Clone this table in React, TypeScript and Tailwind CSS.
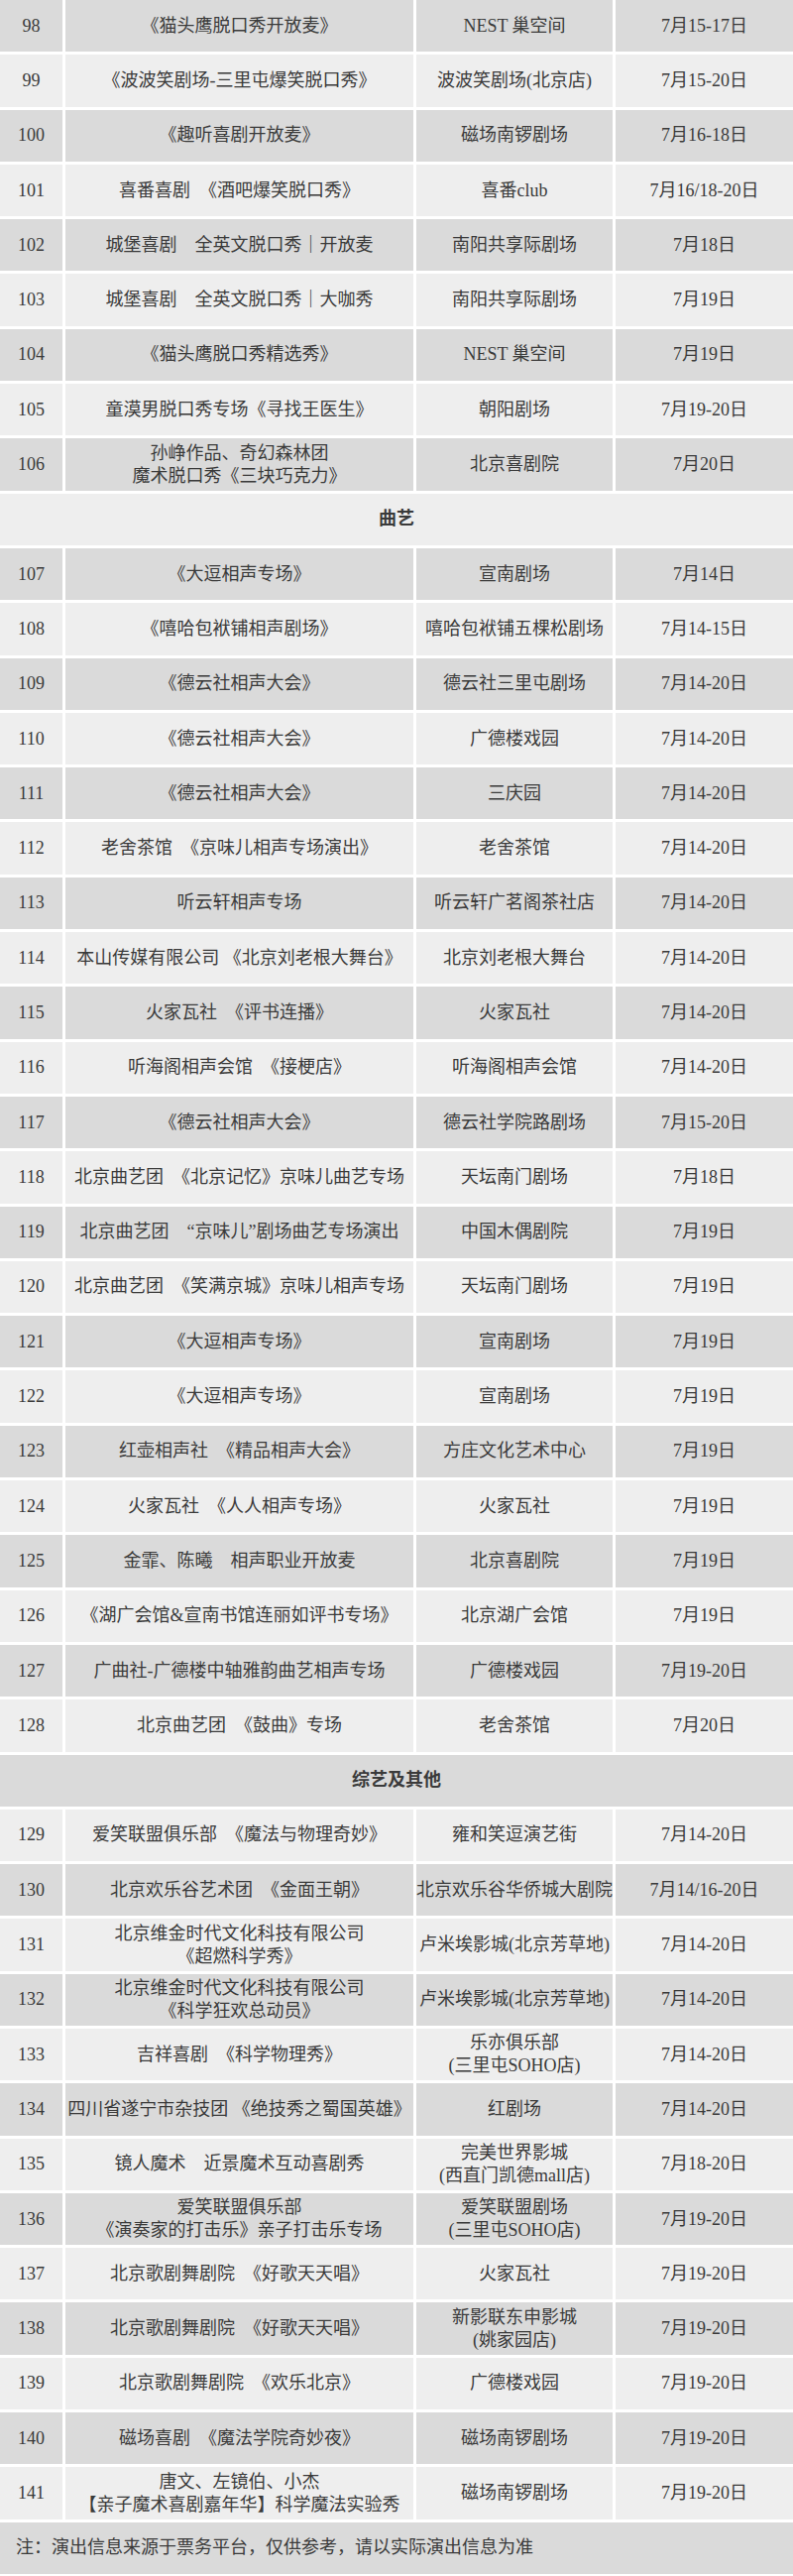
import React from "react";

type Show = {
  kind: "show";
  no: number;
  title: string[];
  venue: string[];
  date: string;
};

type Section = { kind: "section"; label: string };
type Note = { kind: "note"; text: string };
type Item = Show | Section | Note;

const s = (no: number, title: string | string[], venue: string | string[], date: string): Show => ({
  kind: "show",
  no,
  title: Array.isArray(title) ? title : [title],
  venue: Array.isArray(venue) ? venue : [venue],
  date,
});

const items: Item[] = [
  s(98, "《猫头鹰脱口秀开放麦》", "NEST 巢空间", "7月15-17日"),
  s(99, "《波波笑剧场-三里屯爆笑脱口秀》", "波波笑剧场(北京店)", "7月15-20日"),
  s(100, "《趣听喜剧开放麦》", "磁场南锣剧场", "7月16-18日"),
  s(101, "喜番喜剧　《酒吧爆笑脱口秀》", "喜番club", "7月16/18-20日"),
  s(102, "城堡喜剧　全英文脱口秀｜开放麦", "南阳共享际剧场", "7月18日"),
  s(103, "城堡喜剧　全英文脱口秀｜大咖秀", "南阳共享际剧场", "7月19日"),
  s(104, "《猫头鹰脱口秀精选秀》", "NEST 巢空间", "7月19日"),
  s(105, "童漠男脱口秀专场《寻找王医生》", "朝阳剧场", "7月19-20日"),
  s(106, ["孙峥作品、奇幻森林团", "魔术脱口秀《三块巧克力》"], "北京喜剧院", "7月20日"),
  { kind: "section", label: "曲艺" },
  s(107, "《大逗相声专场》", "宣南剧场", "7月14日"),
  s(108, "《嘻哈包袱铺相声剧场》", "嘻哈包袱铺五棵松剧场", "7月14-15日"),
  s(109, "《德云社相声大会》", "德云社三里屯剧场", "7月14-20日"),
  s(110, "《德云社相声大会》", "广德楼戏园", "7月14-20日"),
  s(111, "《德云社相声大会》", "三庆园", "7月14-20日"),
  s(112, "老舍茶馆　《京味儿相声专场演出》", "老舍茶馆", "7月14-20日"),
  s(113, "听云轩相声专场", "听云轩广茗阁茶社店", "7月14-20日"),
  s(114, "本山传媒有限公司 《北京刘老根大舞台》", "北京刘老根大舞台", "7月14-20日"),
  s(115, "火家瓦社　《评书连播》", "火家瓦社", "7月14-20日"),
  s(116, "听海阁相声会馆　《接梗店》", "听海阁相声会馆", "7月14-20日"),
  s(117, "《德云社相声大会》", "德云社学院路剧场", "7月15-20日"),
  s(118, "北京曲艺团　《北京记忆》京味儿曲艺专场", "天坛南门剧场", "7月18日"),
  s(119, "北京曲艺团　“京味儿”剧场曲艺专场演出", "中国木偶剧院", "7月19日"),
  s(120, "北京曲艺团　《笑满京城》京味儿相声专场", "天坛南门剧场", "7月19日"),
  s(121, "《大逗相声专场》", "宣南剧场", "7月19日"),
  s(122, "《大逗相声专场》", "宣南剧场", "7月19日"),
  s(123, "红壶相声社　《精品相声大会》", "方庄文化艺术中心", "7月19日"),
  s(124, "火家瓦社　《人人相声专场》", "火家瓦社", "7月19日"),
  s(125, "金霏、陈曦　相声职业开放麦", "北京喜剧院", "7月19日"),
  s(126, "《湖广会馆&宣南书馆连丽如评书专场》", "北京湖广会馆", "7月19日"),
  s(127, "广曲社-广德楼中轴雅韵曲艺相声专场", "广德楼戏园", "7月19-20日"),
  s(128, "北京曲艺团　《鼓曲》专场", "老舍茶馆", "7月20日"),
  { kind: "section", label: "综艺及其他" },
  s(129, "爱笑联盟俱乐部　《魔法与物理奇妙》", "雍和笑逗演艺街", "7月14-20日"),
  s(130, "北京欢乐谷艺术团　《金面王朝》", "北京欢乐谷华侨城大剧院", "7月14/16-20日"),
  s(131, ["北京维金时代文化科技有限公司", "《超燃科学秀》"], "卢米埃影城(北京芳草地)", "7月14-20日"),
  s(132, ["北京维金时代文化科技有限公司", "《科学狂欢总动员》"], "卢米埃影城(北京芳草地)", "7月14-20日"),
  s(133, "吉祥喜剧　《科学物理秀》", ["乐亦俱乐部", "(三里屯SOHO店)"], "7月14-20日"),
  s(134, "四川省遂宁市杂技团 《绝技秀之蜀国英雄》", "红剧场", "7月14-20日"),
  s(135, "镜人魔术　近景魔术互动喜剧秀", ["完美世界影城", "(西直门凯德mall店)"], "7月18-20日"),
  s(136, ["爱笑联盟俱乐部", "《演奏家的打击乐》亲子打击乐专场"], ["爱笑联盟剧场", "(三里屯SOHO店)"], "7月19-20日"),
  s(137, "北京歌剧舞剧院　《好歌天天唱》", "火家瓦社", "7月19-20日"),
  s(138, "北京歌剧舞剧院　《好歌天天唱》", ["新影联东申影城", "(姚家园店)"], "7月19-20日"),
  s(139, "北京歌剧舞剧院　《欢乐北京》", "广德楼戏园", "7月19-20日"),
  s(140, "磁场喜剧　《魔法学院奇妙夜》", "磁场南锣剧场", "7月19-20日"),
  s(141, ["唐文、左镜伯、小杰", "【亲子魔术喜剧嘉年华】科学魔法实验秀"], "磁场南锣剧场", "7月19-20日"),
  { kind: "note", text: "注：演出信息来源于票务平台，仅供参考，请以实际演出信息为准" },
];

const Cell: React.FC<{ lines: string[]; bg: string }> = ({ lines, bg }) => (
  <div className={`${bg} flex flex-col items-center justify-center text-center leading-[23px]`}>
    {lines.map((line, i) => (
      <div key={i} className="whitespace-nowrap">
        {line}
      </div>
    ))}
  </div>
);

export default function App() {
  return (
    <div className="w-[800px] bg-white font-['Liberation_Serif','Noto_Sans_CJK_SC',serif] text-[18px] text-[#3a3a3a]">
      <div className="grid grid-cols-[63px_351px_198px_1fr] auto-rows-[52.3px] gap-[3px]">
        {items.map((item, idx) => {
          const bg = idx % 2 === 0 ? "bg-[#dadada]" : "bg-[#eeeeee]";
          if (item.kind === "section") {
            return (
              <div key={idx} className={`${bg} col-span-4 flex items-center justify-center font-bold`}>
                {item.label}
              </div>
            );
          }
          if (item.kind === "note") {
            return (
              <div key={idx} className={`${bg} col-span-4 flex items-center pl-4`}>
                {item.text}
              </div>
            );
          }
          return (
            <React.Fragment key={idx}>
              <Cell lines={[String(item.no)]} bg={bg} />
              <Cell lines={item.title} bg={bg} />
              <Cell lines={item.venue} bg={bg} />
              <Cell lines={[item.date]} bg={bg} />
            </React.Fragment>
          );
        })}
      </div>
    </div>
  );
}
